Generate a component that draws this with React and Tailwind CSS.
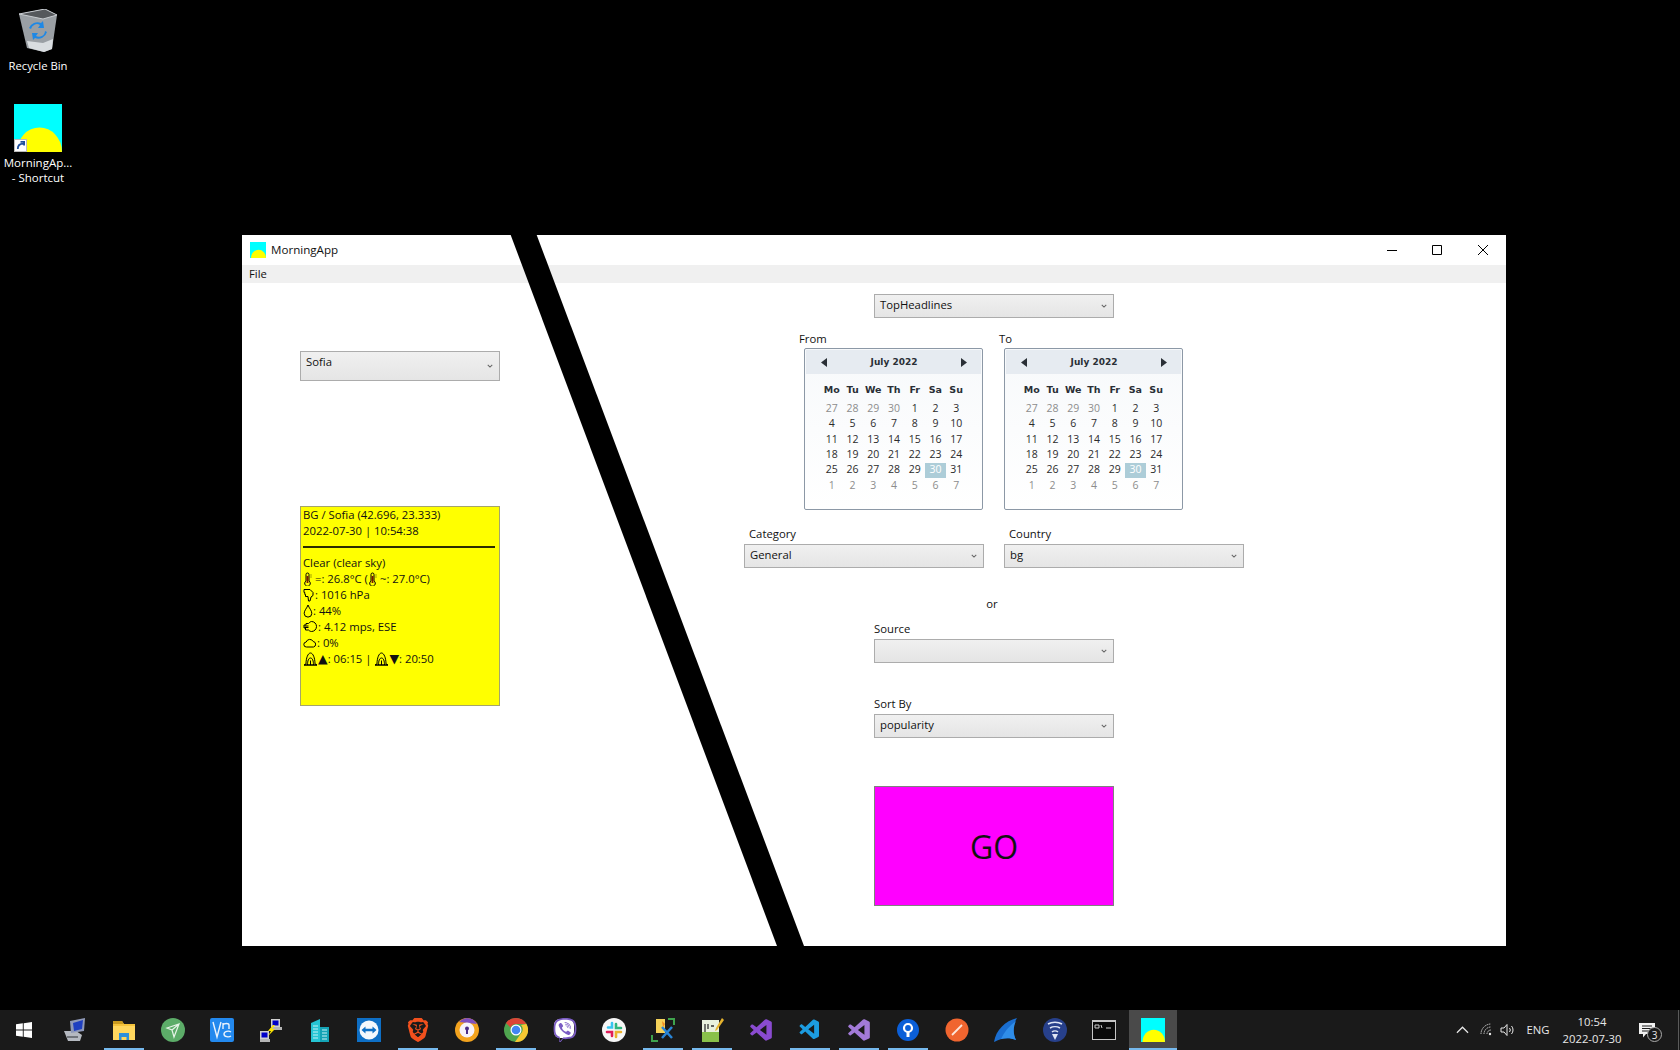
import { FaViber } from 'react-icons/fa'
import { VscVscode } from 'react-icons/vsc'
import { BiLogoVisualStudio } from 'react-icons/bi'
import { SiBrave } from 'react-icons/si'

const weeks = [
  [27, 28, 29, 30, 1, 2, 3],
  [4, 5, 6, 7, 8, 9, 10],
  [11, 12, 13, 14, 15, 16, 17],
  [18, 19, 20, 21, 22, 23, 24],
  [25, 26, 27, 28, 29, 30, 31],
  [1, 2, 3, 4, 5, 6, 7],
]
const dayNames = ['Mo', 'Tu', 'We', 'Th', 'Fr', 'Sa', 'Su']

const AppIcon = ({ className }) => (
  <svg viewBox="0 0 48 48" className={className}>
    <rect width="48" height="48" fill="#00ffff" />
    <path d="M3 48a22 24 0 0 1 45 0z" fill="#ffff00" />
  </svg>
)

const Combo = ({ value, className = '', top }) => (
  <div className={`flex justify-between pl-[5px] pr-[5px] bg-gradient-to-b from-[#f0f0f0] to-[#e5e5e5] border border-[#acacac] text-[#111] ${className}`}>
    <span className={top ? 'leading-[20px]' : 'self-center pb-[2px]'}>{value}</span>
    <svg viewBox="0 0 8 5" className="w-[6px] h-[4px] self-center mr-[1px] fill-none stroke-[#666] stroke-[1.4]">
      <path d="M1 1l3 3 3-3" />
    </svg>
  </div>
)

const Calendar = () => (
  <div className="w-[179px] h-[162px] p-px border border-[#8c98a6] rounded-[2px] bg-gradient-to-b from-[#f7f9fb] to-white">
    <div className="h-6 flex items-center justify-between pl-[15px] pr-[14px] bg-[#e6ebf1]">
      <svg viewBox="0 0 6 9" className="w-[6px] h-[9px] fill-[#2a2f36]"><path d="M6 0v9L0 4.5z" /></svg>
      <span className="pt-px font-['DejaVu_Sans'] font-bold text-[9px] text-[#2a2f36]">July 2022</span>
      <svg viewBox="0 0 6 9" className="w-[6px] h-[9px] fill-[#2a2f36]"><path d="M0 0v9l6-4.5z" /></svg>
    </div>
    <div className="ml-[15.5px] mt-2 w-[145px] grid grid-cols-7">
      {dayNames.map(d => (
        <div key={d} className="h-4 flex items-center justify-center font-['DejaVu_Sans'] font-bold text-[9.5px] text-[#2a2f36]">{d}</div>
      ))}
    </div>
    <div className="ml-[15.5px] mt-[3px] w-[145px] grid grid-cols-7 text-[10.5px]">
      {weeks.map((week, w) =>
        week.map((day, i) => {
          const muted = (w === 0 && i < 4) || w === 5
          const selected = w === 4 && i === 5
          return (
            <div
              key={`${w}-${i}`}
              className={`h-[15.4px] flex items-center justify-center ${selected ? 'bg-[#adcdd8] text-white' : muted ? 'text-[#8d8d8d]' : 'text-[#2b2b2b]'}`}
            >
              {day}
            </div>
          )
        })
      )}
    </div>
  </div>
)

const Thermo = () => (
  <svg viewBox="0 0 9 14" className="inline w-[9px] h-[14px] mr-[3px] align-[-3px] fill-none stroke-black">
    <path d="M3 9V2.500a1.500 1.500 0 0 1 3 0V9a2.800 2.800 0 1 1-3 0z" />
    <path d="M4.500 4v7" stroke="#7a1a00" strokeWidth="1.800" />
    <path d="M7.500 3h1M7.500 5h1" strokeWidth=".7" />
  </svg>
)
const Hand = () => (
  <svg viewBox="0 0 12 14" className="inline w-3 h-[14px] align-[-3px] fill-none stroke-black">
    <path d="M1 1.500h6l3 3v3L8 9 7 13H5.500L5 8.500H2.500V6.500H1.800V4.500H1z" />
  </svg>
)
const Drop = () => (
  <svg viewBox="0 0 10 14" className="inline w-[10px] h-[14px] align-[-3px] fill-none stroke-black">
    <path d="M5 1C4 4 1.200 6.500 1.200 9.300a3.800 3.800 0 0 0 7.600 0C8.800 6.500 6 4 5 1z" />
  </svg>
)
const Wind = () => (
  <svg viewBox="0 0 15 13" className="inline w-[15px] h-[13px] align-[-2px] fill-none stroke-black">
    <path d="M8.500 1.500a5 5 0 1 1 0 10c-1 0-2-.5-3-1.500H2.500V8H1V5h2V3.500h2.500c1-1 2-2 3-2z" />
    <path d="M1.500 6h4M1.500 7.500h4" />
  </svg>
)
const Cloud = () => (
  <svg viewBox="0 0 14 10" className="inline w-[14px] h-[10px] align-[-1px] fill-none stroke-black">
    <path d="M3.500 9a2.500 2.500 0 0 1-.3-5A3.800 3.800 0 0 1 10.200 3.500 2.800 2.800 0 0 1 10.500 9z" />
  </svg>
)
const Sunrise = () => (
  <svg viewBox="0 0 15 14" className="inline w-[15px] h-[14px] align-[-3px] fill-none stroke-black">
    <path d="M1 13l2-1c0-6 2-11 4.500-11S12 6 12 12l2 1z" />
    <path d="M4.500 13c0-4 1-7 3-7s3 3 3 7M7.500 8.500V13M1 13h13" />
  </svg>
)

const Weather = () => (
  <div className="w-[200px] h-[200px] mt-[125px] bg-[#ffff00] border border-[#a5a56a] pl-[2px] pr-[4px] text-[#111] leading-4 whitespace-pre">
    <div>BG / Sofia (42.696, 23.333)</div>
    <div>2022-07-30 | 10:54:38</div>
    <div className="h-4 flex items-center"><div className="w-full h-[2px] bg-[#2c2c00]" /></div>
    <div>Clear (clear sky)</div>
    <div><Thermo />=: 26.8°C (<Thermo />~: 27.0°C)</div>
    <div><Hand />: 1016 hPa</div>
    <div><Drop />: 44%</div>
    <div><Wind />: 4.12 mps, ESE</div>
    <div><Cloud />: 0%</div>
    <div><Sunrise /><span className="font-['DejaVu_Sans'] text-[12.5px]">▲</span>: 06:15 | <Sunrise /><span className="font-['DejaVu_Sans'] text-[12.5px]">▼</span>: 20:50</div>
  </div>
)

const MorningWindow = () => (
  <div className="absolute left-[242px] top-[235px] w-[1264px] h-[711px] bg-white flex flex-col font-['Open_Sans'] text-[11.3px] text-[#111]">
    <div className="h-[30px] flex items-center pl-2">
      <AppIcon className="w-4 h-4" />
      <span className="ml-[5px] text-[11.6px]">MorningApp</span>
      <div className="ml-auto flex">
        <div className="w-[44px] h-[30px] flex items-center justify-center">
          <svg viewBox="0 0 10 10" className="w-[10px] h-[10px] stroke-black"><path d="M0 5.500h10" /></svg>
        </div>
        <div className="w-[46px] h-[30px] flex items-center justify-center">
          <svg viewBox="0 0 10 10" className="w-[10px] h-[10px] fill-none stroke-black"><path d="M.5.500h9v9h-9z" /></svg>
        </div>
        <div className="w-[46px] h-[30px] flex items-center justify-center">
          <svg viewBox="0 0 10 10" className="w-[10px] h-[10px] stroke-black"><path d="M0 0l10 10M10 0L0 10" /></svg>
        </div>
      </div>
    </div>
    <div className="h-[18px] bg-[#f0f0f0] flex items-center pl-[7px] pt-px">File</div>

    <div className="flex flex-1">
      <div className="ml-[58px] w-[200px] pt-[68px]">
        <Combo value="Sofia" top className="h-[30px]" />
        <Weather />
      </div>

      <div className="ml-[244px] w-[500px] pt-[11px]">
        <Combo value="TopHeadlines" className="ml-[130px] w-[240px] h-6" />

        <div className="flex ml-[55px] mt-3">
          <div className="w-[200px]">
            <div className="h-[18px] leading-[17px]">From</div>
            <div className="ml-[5px]"><Calendar /></div>
          </div>
          <div>
            <div className="h-[18px] leading-[17px]">To</div>
            <div className="ml-[5px]"><Calendar /></div>
          </div>
        </div>

        <div className="flex gap-5 mt-[16px]">
          <div className="w-[240px]">
            <div className="h-[18px] pl-[5px] leading-[16px]">Category</div>
            <Combo value="General" className="h-6" />
          </div>
          <div className="w-[240px]">
            <div className="h-[18px] pl-[5px] leading-[16px]">Country</div>
            <Combo value="bg" className="h-6" />
          </div>
        </div>

        <div className="mt-[27px] h-[18px] leading-[18px] text-center w-[496px]">or</div>

        <div className="ml-[130px] w-[240px] mt-[7px]">
          <div className="h-[19px] leading-[17px]">Source</div>
          <Combo value="" className="h-6" />
          <div className="h-[19px] leading-[17px] mt-8">Sort By</div>
          <Combo value="popularity" className="h-6" />
          <button className="w-[240px] h-[120px] mt-12 pt-[2px] bg-[#ff00ff] border border-[#808080] text-[32px] text-[#111] flex items-center justify-center">
            GO
          </button>
        </div>
      </div>
    </div>

    {/* black slash across the window */}
    <svg viewBox="0 0 1264 711" className="absolute inset-0 w-full h-full pointer-events-none">
      <polygon points="268.700,0 294.700,0 562,711 535,711" fill="#000" />
    </svg>
  </div>
)

const Start = () => (
  <svg viewBox="0 0 16 16" className="w-4 h-4 fill-white"><path d="M0 2.300l6.800-1v6.300H0zM7.700 1.200L16 0v7.600H7.700zM0 8.400h6.800v6.300l-6.800-1zM7.700 8.400H16V16l-8.300-1.200z" /></svg>
)
const Computer = () => (
  <svg viewBox="0 0 24 24" className="w-6 h-6">
    <path d="M1 13l4 10h12l2-6-6-4z" fill="#b5b9c0" />
    <path d="M7 3l15-3-1 13-13 2z" fill="#8f99b8" />
    <path d="M10 5l10-3-1 9-8 2z" fill="#1f3fc0" />
    <path d="M4 18h11v2H4z" fill="#70747a" />
  </svg>
)
const Folder = () => (
  <svg viewBox="0 0 24 24" className="w-6 h-6">
    <path d="M1 3h9l2 3h11v16H1z" fill="#f5c33b" />
    <path d="M1 8h22v14H1z" fill="#ffd75e" />
    <path d="M7 15h10v7h-2.500v-3h-5v3H7z" fill="#2d8fdc" />
    <path d="M1 3h9l2 3H1z" fill="#c99a1f" />
  </svg>
)
const GreenArrow = () => (
  <svg viewBox="0 0 24 24" className="w-6 h-6">
    <circle cx="12" cy="12" r="12" fill="#5cac68" />
    <path d="M6 10l12-4-5 13-2-7zM11 12l7-6" fill="none" stroke="#e6f3e7" strokeWidth="1.200" />
  </svg>
)
const Vnc = () => (
  <svg viewBox="0 0 24 24" className="w-6 h-6">
    <rect width="24" height="24" rx="2" fill="#2389ee" />
    <path d="M3 4l4 15 4-15M13 11V5M13 7c1-2 6-2 6 0v4M21 14c-2-1.500-7-1-7 2s5 3.500 7 2" fill="none" stroke="#e8f2fd" strokeWidth="1.400" />
  </svg>
)
const NetPcs = () => (
  <svg viewBox="0 0 24 24" className="w-6 h-6">
    <rect x="12" y="1" width="9" height="8" fill="#d0d0d0" />
    <rect x="13.500" y="2.500" width="6" height="5" fill="#0000c8" />
    <rect x="13" y="9" width="10" height="3" fill="#b5b5b5" />
    <rect x="1" y="13" width="9" height="8" fill="#d0d0d0" />
    <rect x="2.500" y="14.500" width="6" height="5" fill="#0000c8" />
    <rect x="1" y="21" width="10" height="3" fill="#b5b5b5" />
    <path d="M14 7l-5 6 3 0-3 5 7-7-3 0 3-4z" fill="#ffe600" />
  </svg>
)
const Buildings = () => (
  <svg viewBox="0 0 24 24" className="w-6 h-6">
    <path d="M3 5l9-4v23H3z" fill="#25c4d3" />
    <path d="M12 9h9v15h-9z" fill="#14a3b5" />
    <path d="M5 8h5M5 11h5M5 14h5M5 17h5M5 20h5M14 12h5M14 15h5M14 18h5M14 21h5" stroke="#c5f2f6" />
  </svg>
)
const TeamViewer = () => (
  <svg viewBox="0 0 24 24" className="w-6 h-6">
    <rect width="24" height="24" fill="#0e6fc5" />
    <circle cx="12" cy="12" r="9.500" fill="#f4f8fc" />
    <path d="M4.500 12l4-3.500v2.300h7V8.500l4 3.500-4 3.500v-2.300h-7v2.300z" fill="#0e6fc5" />
  </svg>
)
const Brave = () => <SiBrave className="w-6 h-6 text-[#f2501d]" />
const KeyCircle = () => (
  <svg viewBox="0 0 24 24" className="w-6 h-6">
    <circle cx="12" cy="12" r="12" fill="#f3a31e" />
    <path d="M12 0a12 12 0 0 1 10 6L4 4a12 12 0 0 1 8-4z" fill="#7f4fc0" />
    <circle cx="12" cy="12" r="7.500" fill="#f6f2fb" />
    <circle cx="12" cy="10.500" r="2" fill="#4b2c88" />
    <path d="M11 11h2v5h-2z" fill="#4b2c88" />
  </svg>
)
const Chrome = () => (
  <svg viewBox="0 0 24 24" className="w-6 h-6">
    <circle cx="12" cy="12" r="12" fill="#4fa54f" />
    <path d="M12 0a12 12 0 0 1 10.400 6H12a6 6 0 0 0-5.500 3.500L2 5a12 12 0 0 1 10-5z" fill="#dc4437" />
    <path d="M22.400 6A12 12 0 0 1 11 24l5.500-8A6 6 0 0 0 17 7z" fill="#f7c832" />
    <circle cx="12" cy="12" r="5.500" fill="#fff" />
    <circle cx="12" cy="12" r="4.300" fill="#4285f4" />
  </svg>
)
const Viber = () => (
  <div className="relative w-6 h-6">
    <div className="absolute left-[1px] top-[1px] w-[20px] h-[19px] rounded-[6px] bg-white" />
    <FaViber className="relative w-6 h-6 text-[#7b5cc4]" />
  </div>
)
const Slack = () => (
  <svg viewBox="0 0 24 24" className="w-6 h-6">
    <circle cx="12" cy="12" r="12" fill="#f7f7f7" />
    <g strokeWidth="2.600" strokeLinecap="round">
      <path d="M10 5v4.500H6" stroke="#36c5f0" fill="none" />
      <path d="M19 10h-5V6" stroke="#2eb67d" fill="none" />
      <path d="M14 19v-5h5" stroke="#ecb22e" fill="none" />
      <path d="M5 14h5v4" stroke="#e01e5a" fill="none" />
    </g>
  </svg>
)
const DocCross = () => (
  <svg viewBox="0 0 24 24" className="w-6 h-6">
    <path d="M5 1h9v14H5z" fill="#f5d25a" />
    <path d="M17 1h6v6M1 17v6h6" fill="none" stroke="#3fa34d" strokeWidth="2" />
    <path d="M11 9l10 11M21 9L11 20" stroke="#2a86d8" strokeWidth="2.500" />
    <path d="M11 3l3 3-2 3z" fill="#f08a24" />
  </svg>
)
const Npp = () => (
  <svg viewBox="0 0 24 24" className="w-6 h-6">
    <path d="M2 2h17v22H2z" fill="#e9f1dd" />
    <path d="M2 14h17v10H2z" fill="#89c14a" />
    <path d="M5 6v8M8 6v5M11 8h3" stroke="#333" strokeWidth="1.300" />
    <path d="M22 0l-6 10-1 3 2-1 7-10z" fill="#e6b32e" />
  </svg>
)
const Vs = ({ color }) => <BiLogoVisualStudio className="w-[26px] h-[26px]" style={{ color }} />
const Code = () => <VscVscode className="w-6 h-6 text-[#1c9ce0]" />
const PinCircle = () => (
  <svg viewBox="0 0 24 24" className="w-6 h-6">
    <circle cx="12" cy="12" r="11" fill="#0b5fd8" />
    <circle cx="12" cy="10" r="4" fill="none" stroke="#fff" strokeWidth="2.200" />
    <path d="M10.500 14h3v5h-3z" fill="#fff" />
  </svg>
)
const OrangeCircle = () => (
  <svg viewBox="0 0 24 24" className="w-6 h-6">
    <circle cx="12" cy="12" r="11.500" fill="#f0652f" />
    <path d="M7 17L17 7" stroke="#fde6da" strokeWidth="1.800" />
  </svg>
)
const Fin = () => (
  <svg viewBox="0 0 24 24" className="w-6 h-6">
    <path d="M0 24C2 12 11 3 23 0c-4 6-5 15-1 22-7-3-15-2-22 2z" fill="#1a6ed0" />
    <path d="M7 21c3-7 8-13 15-18-3 6-3 13 0 19-5-2-10-2-15-1z" fill="#2f8de8" />
  </svg>
)
const Globe = () => (
  <svg viewBox="0 0 24 24" className="w-6 h-6">
    <circle cx="12" cy="12" r="12" fill="#27408b" />
    <path d="M5 6a10 6 0 0 1 14 0M7 10a7 4 0 0 1 10 0M9 14a4 3 0 0 1 6 0" fill="none" stroke="#dfe6f5" strokeWidth="1.500" />
    <path d="M9 16h6l-3 6z" fill="#dfe6f5" />
  </svg>
)
const Cmd = () => (
  <svg viewBox="0 0 24 24" className="w-6 h-6">
    <rect y="2" width="24" height="20" fill="#c6c6c6" />
    <rect x="1" y="4" width="22" height="17" fill="#0a0a0a" />
    <path d="M3 7h4v3H3zM9 7l1 3M14 10h5" fill="none" stroke="#cfcfcf" />
  </svg>
)

const taskItems = [
  { Icon: Computer },
  { Icon: Folder, open: true },
  { Icon: GreenArrow },
  { Icon: Vnc },
  { Icon: NetPcs },
  { Icon: Buildings },
  { Icon: TeamViewer },
  { Icon: Brave, open: true },
  { Icon: KeyCircle },
  { Icon: Chrome, open: true },
  { Icon: Viber },
  { Icon: Slack },
  { Icon: DocCross, open: true },
  { Icon: Npp, open: true },
  { Icon: () => <Vs color="#8a4bd0" /> },
  { Icon: Code, open: true },
  { Icon: () => <Vs color="#a27ad8" />, open: true },
  { Icon: PinCircle, open: true },
  { Icon: OrangeCircle },
  { Icon: Fin },
  { Icon: Globe },
  { Icon: Cmd },
]

const Taskbar = () => (
  <div className="h-10 bg-[#1a1a1a] flex font-['Open_Sans'] text-[11.3px] text-[#e8e8e8]">
    <div className="w-12 h-10 flex items-center justify-center"><Start /></div>
    <div className="ml-[3px] flex gap-px">
      {taskItems.map(({ Icon, open }, i) => (
        <div key={i} className="relative w-12 h-10 flex items-center justify-center">
          <Icon />
          {open && <div className="absolute bottom-0 left-1 right-1 h-[2px] bg-[#76b9ed]" />}
        </div>
      ))}
      <div className="relative w-12 h-10 flex items-center justify-center bg-[#4a4a4a]">
        <AppIcon className="w-6 h-6" />
        <div className="absolute bottom-0 inset-x-0 h-[2px] bg-[#76b9ed]" />
      </div>
    </div>

    <div className="ml-auto flex items-center">
      <div className="w-6 flex justify-center">
        <svg viewBox="0 0 14 8" className="w-[13px] h-2 fill-none stroke-[#e8e8e8] stroke-[1.300]"><path d="M1 7l6-6 6 6" /></svg>
      </div>
      <div className="w-[26px] flex justify-center">
        <svg viewBox="0 0 14 14" className="w-[14px] h-[14px] fill-none stroke-[#c8c8c8]">
          <path d="M1 11a10 10 0 0 1 10-10M4 11a7 7 0 0 1 7-7M7 11a4 4 0 0 1 4-4" strokeDasharray="1.500 .7" />
          <circle cx="10" cy="11" r="1.200" fill="#e8e8e8" stroke="none" />
        </svg>
      </div>
      <div className="w-4 flex justify-center">
        <svg viewBox="0 0 16 14" className="w-4 h-[14px] fill-none stroke-[#e8e8e8]">
          <path d="M1 5h3l3-3.500v11L4 9H1zM9.500 5a3 3 0 0 1 0 4M11.500 3a6 6 0 0 1 0 8" />
        </svg>
      </div>
      <div className="w-11 text-center">ENG</div>
      <div className="w-16 text-center leading-[17px]">
        <div>10:54</div>
        <div>2022-07-30</div>
      </div>
      <div className="relative w-[46px] h-10 flex items-center justify-center">
        <svg viewBox="0 0 16 15" className="w-4 h-[15px]">
          <path d="M0 0h16v11H7l-3 3.500V11H0z" fill="#f2f2f2" />
          <path d="M3 3h10M3 5.500h10M3 8h7" stroke="#1a1a1a" />
        </svg>
        <div className="absolute left-[23px] top-[17px] w-[15px] h-[15px] rounded-full border border-[#aaa] bg-[#1a1a1a] flex items-center justify-center text-[10px] leading-none">3</div>
      </div>
      <div className="w-[10px] h-10 flex justify-end pr-[1px]"><div className="w-px h-full bg-[#5a5a5a]" /></div>
    </div>
  </div>
)

export default function App() {
  return (
    <div className="w-[1680px] h-[1050px] bg-black flex flex-col overflow-hidden">
      <div className="relative flex-1">
        {/* desktop icons */}
        <div className="absolute left-0 top-[9px] w-[76px] flex flex-col items-center font-['Open_Sans'] text-[11.3px] text-white">
          <svg viewBox="0 0 40 44" className="w-10 h-11">
            <path d="M1 5l26-5 12 6-5 34-8 3-17-4z" fill="#9a9fa4" />
            <path d="M1 5l26-5 12 6-14 4z" fill="#55585c" stroke="#c8ccd0" />
            <path d="M9 32l16 2 10-4-1 10-8 3-15-4z" fill="#d9dde0" />
            <path d="M13 20a6 6 0 0 1 9-4l-2 3 6 0-1-7-2 2a9 9 0 0 0-12 5zM27 22a6 6 0 0 1-9 5l2-3-6 0 1 7 2-2a9 9 0 0 0 12-6z" fill="#1e88e5" />
          </svg>
          <div className="mt-[5px] leading-4">Recycle Bin</div>
        </div>
        <div className="absolute left-0 top-[104px] w-[76px] flex flex-col items-center font-['Open_Sans'] text-[11.5px] text-white">
          <div className="relative w-12 h-12">
            <AppIcon className="w-12 h-12" />
            <div className="absolute left-0 bottom-0 w-[13px] h-[13px] bg-white border border-[#bbb] flex items-center justify-center">
              <svg viewBox="0 0 10 10" className="w-[9px] h-[9px] fill-none stroke-[#1f4f9c] stroke-2"><path d="M2 9c0-4 2-6 6-6M5 1h4v4" /></svg>
            </div>
          </div>
          <div className="mt-[3px] leading-[15px] text-center">MorningAp...<br />- Shortcut</div>
        </div>

        <MorningWindow />
      </div>
      <Taskbar />
    </div>
  )
}
